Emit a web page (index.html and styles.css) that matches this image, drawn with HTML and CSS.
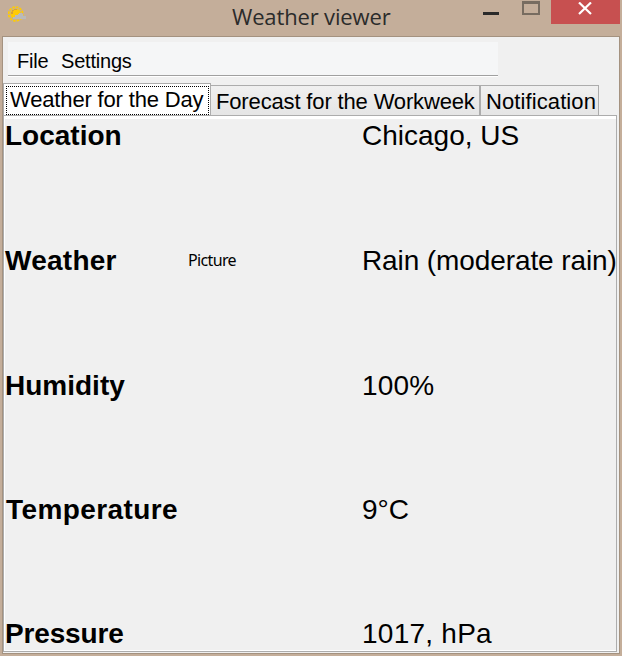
FILE: index.html
```
<!DOCTYPE html>
<html lang="en">
<head>
<meta charset="utf-8">
<title>Weather viewer</title>
<link rel="stylesheet" href="styles.css">
</head>
<body>
<div class="window">
  <header class="titlebar">
    <svg class="app-icon" width="18" height="17" viewBox="0 0 18 17">
      <circle cx="7.7" cy="8" r="7" fill="none" stroke="#ffcb05" stroke-width="1.7" stroke-dasharray="2.6 1.06"/>
      <circle cx="7.7" cy="8" r="5.4" fill="#ffcb05"/>
      <path d="M3 8V6h1V4h2V3h3v1H6v1H5v3z" fill="#d5a13c"/>
      <path d="M5 13v-2h2V9h3V8h1V7h3v1h1v2h3v3z" fill="#bababa"/>
    </svg>
    <h1 class="title">Weather viewer</h1>
    <div class="controls">
      <span class="minimize"></span>
      <span class="maximize"></span>
      <span class="close">
        <svg width="14" height="13" viewBox="0 0 14 13"><path d="M1 .5l12 11.5M13 .5L1 12" stroke="#fff" stroke-width="2.2"/></svg>
      </span>
    </div>
  </header>
  <main class="client">
    <nav class="menu"><span class="file">File</span><span class="settings">Settings</span></nav>
    <div class="tabs">
      <div class="tab active"><span class="focus">Weather for the Day</span></div>
      <div class="tab forecast"><span>Forecast for the Workweek</span></div>
      <div class="tab notification"><span>Notification</span></div>
    </div>
    <section class="pane">
      <div class="row"><b class="location">Location</b><i></i><span class="city">Chicago, US</span></div>
      <div class="row"><b class="weather">Weather</b><i>Picture</i><span class="rain">Rain (moderate rain)</span></div>
      <div class="row"><b class="humidity">Humidity</b><i></i><span class="percent">100%</span></div>
      <div class="row"><b class="temperature">Temperature</b><i></i><span>9°C</span></div>
      <div class="row"><b class="pressure">Pressure</b><i></i><span class="hpa">1017, hPa</span></div>
    </section>
  </main>
</div>
</body>
</html>
```
FILE: styles.css
```
* { box-sizing: border-box; }
body { margin: 0; overflow: hidden; font-family: "Liberation Sans", Arial, sans-serif; color: #000; }
.window { width: 622px; height: 656px; padding: 0 2px; background: #c4ae9a; }
.titlebar { display: flex; height: 36px; }
.app-icon { flex: none; margin: 6px 0 0 6px; }
.title { width: 171px; margin: 0 0 0 206px; font: 400 22px/32px "Open Sans", "Noto Sans", sans-serif; letter-spacing: -.15px; color: #2b2b2b; white-space: nowrap; }
.controls { display: flex; margin-left: auto; }
.minimize { width: 16px; height: 3px; margin: 12px 23px 0 0; background: #2a2a2a; }
.maximize { width: 18px; height: 14px; margin: 1px 11px 0 0; border: 2px solid #776c60; border-top-width: 3px; }
.close { width: 69px; height: 24px; padding: 2px 0 0 27px; background: #c75050; }
.close svg { display: block; }
.client { width: 618px; height: 618px; border: 1px solid #a49280; background: #f0f0f0; padding-top: 5px; }
.menu { display: flex; width: 490px; height: 35px; margin-left: 5px; padding-left: 9px; background: #f5f6f7; border-bottom: 1px solid #fff; box-shadow: inset 0 -1px #a0a0a0; font-size: 20px; line-height: 38px; letter-spacing: -.2px; }
.file { width: 44px; }
.tabs { display: flex; align-items: flex-end; height: 32px; margin-top: 6px; font-size: 22px; white-space: nowrap; }
.tab { height: 30px; border: 1px solid #acacac; border-bottom: 0; background: linear-gradient(#f0f0f0, #e5e5e5); line-height: 31px; padding-left: 5px; }
.tab.active { width: 208px; height: 32px; padding: 2px 1px 0 2px; background: #fff; }
.focus { display: block; height: 29px; padding-left: 3px; border: 1px dotted #000; line-height: 25px; letter-spacing: -.16px; }
.forecast { width: 269px; border-left: 0; letter-spacing: -.15px; }
.notification { width: 119px; letter-spacing: .1px; }
.pane { width: 614px; height: 537px; border: 1px solid #acacac; box-shadow: inset 0 3px #fff, inset 1px 0 #fff, inset 0 -1px #fff; padding: 4px 0 0 1px; }
.row { display: grid; grid-template-columns: 183px 174px 1fr; height: 125px; font-size: 28px; line-height: 32px; white-space: nowrap; }
.row:nth-child(3) { height: 124px; }
.row:nth-child(4) { height: 124px; }
.row:last-child { height: 32px; }
.row i { font: normal 16px/31px "Noto Sans", "Open Sans", sans-serif; letter-spacing: -.65px; }
.weather { letter-spacing: .25px; }
.temperature { padding-left: 1px; letter-spacing: .4px; }
.pressure { letter-spacing: -.15px; }
.rain { letter-spacing: -.1px; }
.percent { letter-spacing: .2px; }
.hpa { letter-spacing: .25px; }
```
